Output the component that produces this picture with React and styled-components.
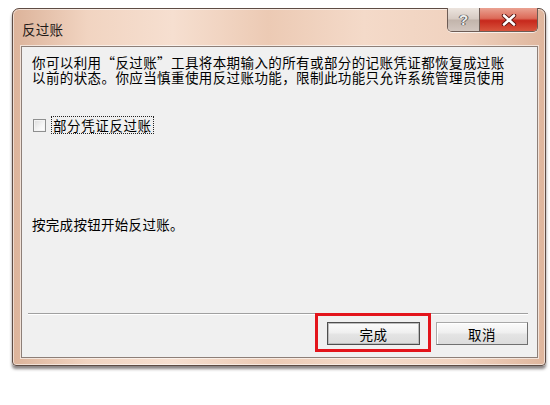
import React from "react";
import styled, { createGlobalStyle } from "styled-components";

const GlobalStyle = createGlobalStyle`
    html, body {
        margin: 0;
        padding: 0;
        background: #ffffff;
    }
    body {
        font-family: "Noto Sans CJK SC", "Liberation Sans", sans-serif;
        width: 550px;
        height: 405px;
        overflow: hidden;
    }
`;

const StyledWindow = styled.div`
    display: flex;
    flex-direction: column;
    box-sizing: border-box;
    width: 534px;
    height: 358px;
    margin: 8px 0 0 12px;
    border: 1px solid #5e4c44;
    border-radius: 7px 7px 4px 4px;
    background: linear-gradient(90deg, #dcb39a 0%, #f1d4c1 14%, #f6dfd0 30%, #eccab4 48%, #f4dac9 66%, #f0d2bf 84%, #dfb69d 100%);
    box-shadow: 0 3px 3px rgba(40, 30, 30, 0.55), inset 0 0 0 1px rgba(255, 255, 255, 0.55);
`;

const StyledTitleBar = styled.div`
    position: relative;
    display: flex;
    align-items: center;
    height: 37px;
    padding-left: 9px;
    flex-shrink: 0;
`;

const StyledTitle = styled.span`
    font-size: 13.5px;
    color: #1f1a18;
    margin-top: 2px;
    letter-spacing: 0.2px;
`;

const StyledCaptionButtons = styled.div`
    position: absolute;
    top: -1px;
    right: 7px;
    display: flex;
    border: 1px solid #6d5c55;
    border-top: none;
    border-radius: 0 0 5px 5px;
    overflow: hidden;
    box-shadow: 0 1px 0 rgba(255, 255, 255, 0.7);
`;

const StyledHelpButton = styled.div`
    display: flex;
    align-items: center;
    justify-content: center;
    width: 31px;
    height: 23px;
    background: linear-gradient(180deg, #ece4de 0%, #d6cac2 48%, #c2b4ab 52%, #d2c6bf 100%);
    border-right: 1px solid #6d5c55;
    font-family: "Liberation Sans", sans-serif;
    font-weight: bold;
    font-size: 15px;
    color: #eeeeee;
    text-shadow: 0 0 1px #4a4a4a, 0 0 1px #4a4a4a, 1px 0 0 #6a6a6a, -1px 0 0 #6a6a6a;
`;

const StyledCloseButton = styled.div`
    display: flex;
    align-items: center;
    justify-content: center;
    width: 57px;
    height: 23px;
    background: linear-gradient(180deg, #eaa292 0%, #dc6a58 45%, #c7281c 55%, #d8543c 100%);
`;

const StyledClient = styled.div`
    display: flex;
    flex-direction: column;
    flex: 1;
    margin: 0 7px 7px 8px;
    border: 1px solid #8d7f78;
    background: #f0f0f0;
    box-shadow: 0 0 0 1px rgba(255, 255, 255, 0.6);
`;

const StyledMessage = styled.div`
    padding: 8px 0 0 10px;
`;

const StyledMessageLine = styled.div`
    height: 15px;
    font-size: 13.5px;
    line-height: 15px;
    color: #000;
    letter-spacing: 0.4px;
    white-space: nowrap;
`;

const StyledCheckRow = styled.label`
    display: flex;
    align-items: center;
    gap: 6px;
    margin: 32px 0 0 11px;
`;

const StyledCheckBox = styled.span`
    box-sizing: border-box;
    width: 13px;
    height: 13px;
    border: 1px solid #8e8f8f;
    background: linear-gradient(135deg, #dcdcdc 0%, #f6f6f6 60%, #ffffff 100%);
    box-shadow: inset 0 0 0 1px #f4f4f4;
`;

const StyledCheckLabel = styled.span`
    padding: 0 1px;
    font-size: 13.5px;
    line-height: 16px;
    color: #000;
    letter-spacing: 0.6px;
    outline: 1px dotted #222;
    outline-offset: 0;
`;

const StyledHint = styled.p`
    margin: 84px 0 0 10px;
    font-size: 13.5px;
    line-height: 15px;
    color: #000;
    letter-spacing: 0.3px;
`;

const StyledFooter = styled.div`
    margin-top: auto;
    padding: 0 9px 12px 6px;
`;

const StyledSeparator = styled.div`
    height: 1px;
    background: #a0a0a0;
    border-bottom: 1px solid #ffffff;
`;

const StyledButtonRow = styled.div`
    display: flex;
    justify-content: flex-end;
    gap: 16px;
    margin-top: 7px;
`;

const StyledButtonSlot = styled.div`
    position: relative;
    display: flex;
`;

const StyledButton = styled.button`
    box-sizing: border-box;
    width: ${(p) => p.$width}px;
    height: 23px;
    padding: 0;
    font-family: "Noto Sans CJK SC", sans-serif;
    font-size: 13.5px;
    color: #000;
    letter-spacing: 0.5px;
    background: linear-gradient(180deg, #fbfbfb 0%, #f0f0f0 45%, #e4e4e4 55%, #dcdcdc 100%);
    border: 1px solid ${(p) => (p.$primary ? "#4e4e4e" : "#a8a8a8")};
    border-right-color: ${(p) => (p.$primary ? "#4e4e4e" : "#707070")};
    border-bottom-color: ${(p) => (p.$primary ? "#4e4e4e" : "#707070")};
    box-shadow: ${(p) => (p.$primary ? "inset 0 0 0 1px #bcbcbc" : "inset 1px 1px 0 #ffffff")};
`;

const StyledHighlight = styled.span`
    position: absolute;
    top: -9px;
    left: -12px;
    right: -11px;
    bottom: -7px;
    border: 3px solid #e3141b;
    pointer-events: none;
`;

function CloseIcon() {
    return (
        <svg width="16" height="12" viewBox="0 0 16 12">
            <path d="M3 1.5 L13 10.5 M13 1.5 L3 10.5" stroke="#5a1410" strokeWidth="4.4" strokeLinecap="round" />
            <path d="M3 1.5 L13 10.5 M13 1.5 L3 10.5" stroke="#ffffff" strokeWidth="2.6" strokeLinecap="round" />
        </svg>
    );
}

export default function App() {
    return (
        <>
            <GlobalStyle />
            <StyledWindow>
                <StyledTitleBar>
                    <StyledTitle>反过账</StyledTitle>
                    <StyledCaptionButtons>
                        <StyledHelpButton>?</StyledHelpButton>
                        <StyledCloseButton>
                            <CloseIcon />
                        </StyledCloseButton>
                    </StyledCaptionButtons>
                </StyledTitleBar>
                <StyledClient>
                    <StyledMessage>
                        <StyledMessageLine>你可以利用“反过账”工具将本期输入的所有或部分的记账凭证都恢复成过账</StyledMessageLine>
                        <StyledMessageLine>以前的状态。你应当慎重使用反过账功能，限制此功能只允许系统管理员使用</StyledMessageLine>
                    </StyledMessage>
                    <StyledCheckRow>
                        <StyledCheckBox />
                        <StyledCheckLabel>部分凭证反过账</StyledCheckLabel>
                    </StyledCheckRow>
                    <StyledHint>按完成按钮开始反过账。</StyledHint>
                    <StyledFooter>
                        <StyledSeparator />
                        <StyledButtonRow>
                            <StyledButtonSlot>
                                <StyledButton $primary $width={93}>完成</StyledButton>
                                <StyledHighlight />
                            </StyledButtonSlot>
                            <StyledButton $width={92}>取消</StyledButton>
                        </StyledButtonRow>
                    </StyledFooter>
                </StyledClient>
            </StyledWindow>
        </>
    );
}
